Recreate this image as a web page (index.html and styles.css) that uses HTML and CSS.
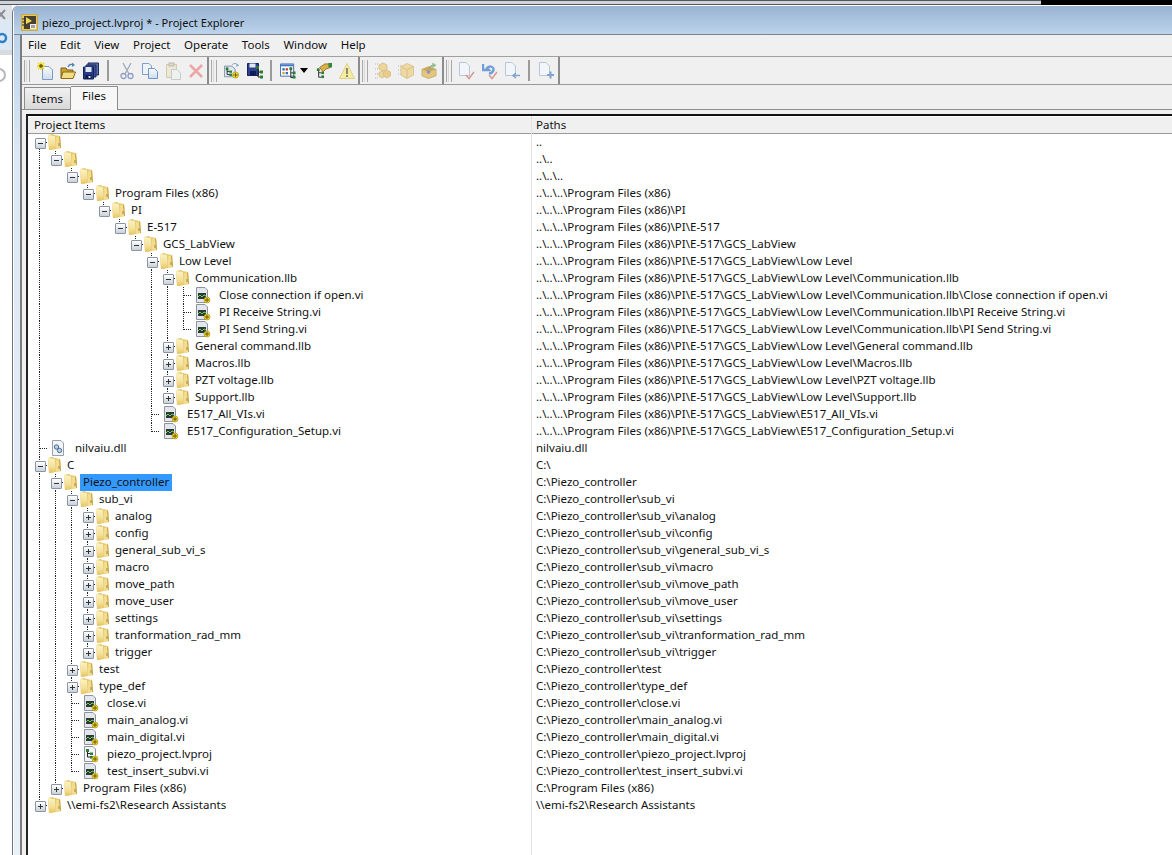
FILE: index.html
```html
<!DOCTYPE html>
<html lang="en">
<head>
<meta charset="utf-8">
<title>piezo_project.lvproj * - Project Explorer</title>
<link rel="stylesheet" href="styles.css">
</head>
<body>
<svg class="defs" width="0" height="0">
  <defs>
    <linearGradient id="fg" x1="0" y1="0" x2="0" y2="1"><stop offset="0" stop-color="#fbf3c4"/><stop offset=".6" stop-color="#f4e09a"/><stop offset="1" stop-color="#e6c35e"/></linearGradient>
    <linearGradient id="pg" x1="0" y1="0" x2="0" y2="1"><stop offset="0" stop-color="#fafbfd"/><stop offset="1" stop-color="#cfdcec"/></linearGradient>
    <symbol id="folder" viewBox="0 0 14 16">
      <path d="M0 1 L5 0 L6 1 L12 2 L13 14 L1 16 Z" fill="#e4c466"/>
      <path d="M0 1 L7 2 L8 15 L1 16 Z" fill="url(#fg)"/>
      <path d="M8 3 L12 2 L13 14 L8 15 Z" fill="#f2dc8e"/>
      <path d="M11 3 L12 2 L13 14 L12 14 Z" fill="#c9a445"/>
      <path d="M10.500 9 h1 v3 h-1 Z" fill="#9a8642"/>
    </symbol>
    <symbol id="vi" viewBox="0 0 16 17">
      <path d="M1.500 .5 H10 L12.500 3 V15.500 H1.500 Z" fill="#e3e7ed" stroke="#8e949c"/>
      <rect x="3" y="6" width="8" height="6" fill="#2e3a30"/>
      <path d="M3 10 L5 8 L7 10 L9 8 L11 9" fill="none" stroke="#6fd06f"/>
      <circle cx="12" cy="13" r="3" fill="#efd22f" stroke="#a08a10" stroke-width=".6"/>
      <path d="M10 13 h4 M12 11 v4" stroke="#6b5a05"/>
    </symbol>
    <symbol id="dll" viewBox="0 0 16 17">
      <path d="M1.500 .5 H10 L12.500 3 V15.500 H1.500 Z" fill="#f2f4f7" stroke="#9aa0a8"/>
      <circle cx="5.500" cy="7" r="2.200" fill="#bcd0e6" stroke="#4a6e96"/>
      <circle cx="8.500" cy="10.500" r="2.200" fill="#bcd0e6" stroke="#4a6e96"/>
    </symbol>
    <symbol id="proj" viewBox="0 0 16 17">
      <path d="M1.500 .5 H10 L12.500 3 V15.500 H1.500 Z" fill="#f2f4f7" stroke="#8e949c"/>
      <path d="M4.500 4 V11 H8 M4.500 7.500 H8" fill="none" stroke="#222"/>
      <rect x="3" y="3" width="3" height="3" fill="#2e7d32"/>
      <rect x="7" y="6.500" width="3" height="2.500" fill="#2e7d32"/>
      <rect x="7" y="10" width="3" height="2.500" fill="#2e7d32"/>
      <circle cx="12" cy="13" r="3" fill="#efd22f" stroke="#a08a10" stroke-width=".6"/>
      <path d="M10 13 h4 M12 11 v4" stroke="#6b5a05"/>
    </symbol>
    <symbol id="i-new" viewBox="0 0 16 18">
      <path d="M5.500 4.500 H12 L15.500 8 V17.500 H5.500 Z" fill="url(#pg)" stroke="#7a9cc4"/>
      <path d="M4 0 V8 M0 4 H8 M1 1 L7 7 M7 1 L1 7" stroke="#f2d800" stroke-width="1.300"/>
      <path d="M4 2 V6 M2 4 H6" stroke="#333"/>
    </symbol>
    <symbol id="i-open" viewBox="0 0 16 18">
      <path d="M1 6 H6 L7 8 H13 V16 H1 Z" fill="#caa235" stroke="#7d5f12"/>
      <path d="M3 10 H15.500 L13 16.500 H1 Z" fill="#f4dc83" stroke="#8a6a18"/>
      <path d="M8 5 C9 2 12 2 13 3" fill="none" stroke="#4f86c0" stroke-width="1.300"/>
      <path d="M12 .5 L15 3 L12 5 Z" fill="#4f86c0"/>
    </symbol>
    <symbol id="i-save" viewBox="0 0 16 18">
      <path d="M5 1 H15.500 V13 H5 Z" fill="#5a6ea8" stroke="#1c2a60"/>
      <path d="M3 3 H13 V15 H3 Z" fill="#3a5096" stroke="#1c2a60"/>
      <path d="M.5 5 H10.500 V17 H.5 Z" fill="#243a86" stroke="#12205a"/>
      <path d="M2.500 5 H8.500 V10 H2.500 Z" fill="#dfe6f2"/>
      <rect x="2.500" y="13" width="6" height="4" fill="#0e1a4c"/>
      <rect x="5.500" y="14" width="2" height="2" fill="#d6dcec"/>
    </symbol>
    <symbol id="i-cut" viewBox="0 0 16 18">
      <path d="M4 1 L10 12 M12 1 L6 12" stroke="#a0adbd" stroke-width="1.400" fill="none"/>
      <circle cx="4.500" cy="14" r="2.500" fill="none" stroke="#8d9dc4" stroke-width="1.300"/>
      <circle cx="11.500" cy="14" r="2.500" fill="none" stroke="#8d9dc4" stroke-width="1.300"/>
    </symbol>
    <symbol id="i-copy" viewBox="0 0 16 18">
      <path d="M.5 1.500 H7 L9.500 4 V12.500 H.5 Z" fill="#eef3fa" stroke="#7b9fd0"/>
      <path d="M6.500 6.500 H12.500 L15.500 9.500 V16.500 H6.500 Z" fill="url(#pg)" stroke="#6f96cb"/>
    </symbol>
    <symbol id="i-paste" viewBox="0 0 16 18">
      <path d="M1.500 2.500 H11.500 V15.500 H1.500 Z" fill="#ece8d8" stroke="#cfc9ae"/>
      <rect x="4" y="1" width="5" height="3" fill="#dcd9c8" stroke="#c0bba5"/>
      <path d="M6.500 7.500 H12 L15.500 11 V17.500 H6.500 Z" fill="#eef1ef" stroke="#c4ccc8"/>
    </symbol>
    <symbol id="i-del" viewBox="0 0 16 18">
      <path d="M2 3 L14 15 M14 3 L2 15" stroke="#eba7a7" stroke-width="2.600"/>
    </symbol>
    <symbol id="i-add" viewBox="0 0 18 18">
      <path d="M.5 3.500 H9 L12.500 7 V15.500 H.5 Z" fill="#dfe7f2" stroke="#7b8ca6"/>
      <path d="M3.500 6 V13 H7 M3.500 9.500 H7" fill="none" stroke="#222"/>
      <rect x="2" y="5" width="3" height="3" fill="#2c7a34"/>
      <rect x="6" y="8.500" width="3" height="2.500" fill="#2c7a34"/>
      <rect x="6" y="12" width="3" height="2.500" fill="#2c7a34"/>
      <circle cx="13" cy="13.500" r="3.500" fill="#f0d92a" stroke="#9f8a10" stroke-width=".6"/>
      <path d="M10.500 13.500 h5 M13 11 v5" stroke="#6b5a05"/>
      <path d="M9 2 C11 0 14 0 15 2" fill="none" stroke="#7f9fc6"/>
      <path d="M14 .5 L17 2.500 L14 4.500 Z" fill="#7f9fc6"/>
    </symbol>
    <symbol id="i-sav2" viewBox="0 0 16 18">
      <path d="M.5 1.500 H11.500 V13.500 H.5 Z" fill="#2c4190" stroke="#14235e"/>
      <rect x="2.500" y="1.500" width="6" height="4" fill="#e0e6f2"/>
      <rect x="3" y="9" width="6" height="4" fill="#0f1c52"/>
      <path d="M11 5 V15 H13 M11 10 H13" fill="none" stroke="#222"/>
      <rect x="9" y="4" width="3" height="3" fill="#2c7a34"/>
      <rect x="13" y="8.500" width="3" height="3" fill="#2c7a34"/>
      <rect x="13" y="13.500" width="3" height="3" fill="#2c7a34"/>
    </symbol>
    <symbol id="i-view" viewBox="0 0 17 18">
      <path d="M.5 1.500 H14.500 V14.500 H.5 Z" fill="#fff" stroke="#3d6ab0"/>
      <rect x="1" y="2" width="13" height="2" fill="#3f78c8"/>
      <rect x="2.500" y="6" width="2.500" height="2.500" fill="#2f6fc0"/>
      <rect x="6" y="6" width="2.500" height="2.500" fill="#d04040"/>
      <rect x="2.500" y="10" width="2.500" height="2.500" fill="#d9a520"/>
      <rect x="6" y="10" width="2.500" height="2.500" fill="#2f6fc0"/>
      <path d="M11.500 6 V16 H14 M11.500 11 H14" fill="none" stroke="#222"/>
      <rect x="10" y="5" width="3" height="3" fill="#2c7a34"/>
      <rect x="13.500" y="9.500" width="3" height="3" fill="#2c7a34"/>
      <rect x="13.500" y="14" width="3" height="3" fill="#2c7a34"/>
    </symbol>
    <symbol id="i-hand" viewBox="0 0 18 18">
      <path d="M3 7 V16 H6 M3 11 H6" fill="none" stroke="#222"/>
      <rect x="1" y="6" width="3" height="3" fill="#2c7a34"/>
      <rect x="6" y="9.500" width="3" height="3" fill="#2c7a34"/>
      <rect x="6" y="14" width="3" height="3" fill="#2c7a34"/>
      <path d="M4 5 L10 1 H15 L16 5 L11 7 L8 10 Z" fill="#d9b347" stroke="#7c5f16" stroke-width=".8"/>
      <rect x="14" y="0" width="4" height="5" fill="#2e8a3a"/>
    </symbol>
    <symbol id="i-warn" viewBox="0 0 16 18">
      <path d="M8 1.500 L15.500 16.500 H.5 Z" fill="#f6eca0" stroke="#ddd08a"/>
      <path d="M8 6 V12" stroke="#8a8a70" stroke-width="2"/>
      <rect x="7" y="13" width="2" height="2" fill="#8a8a70"/>
    </symbol>
    <symbol id="i-pk1" viewBox="0 0 16 18">
      <path d="M0 2 H3 M0 7 H3 M0 12 H3 M0 16 H3" stroke="#b9b6a6" stroke-dasharray="1 1"/>
      <path d="M8 1 L12 3 V7 L8 9 L4 7 V3 Z" fill="#ecd69e" stroke="#d9c184"/>
      <path d="M7 9 L10 10.500 V14 L7 16 L4 14 V10.500 Z" fill="#ecd69e" stroke="#d9c184"/>
      <path d="M12 8 L15.500 10 V14 L12 16 L8.500 14 V10 Z" fill="#e7cc8c" stroke="#d9c184"/>
    </symbol>
    <symbol id="i-pk2" viewBox="0 0 16 18">
      <path d="M0 4 H3 M0 8 H3 M0 12 H3" stroke="#b9b6a6" stroke-dasharray="1 1"/>
      <path d="M9 1.500 L15.500 4.500 V13 L9 16.500 L3 13 V4.500 Z" fill="#eed9a4" stroke="#dcc68f"/>
      <path d="M3 4.500 L9 8 L15.500 4.500 M9 8 V16.500" fill="none" stroke="#d9bf80"/>
    </symbol>
    <symbol id="i-pk3" viewBox="0 0 17 18">
      <path d="M1 7 L8 10 L16 7 V14 L8 17 L1 14 Z" fill="#e3c680" stroke="#ccb06c"/>
      <path d="M1 7 L8 4 L16 7 L8 10 Z" fill="#c9a85e"/>
      <circle cx="8" cy="10" r="1.800" fill="#8d8fc6"/>
      <path d="M9 6 C10 4 11 3 13 3" fill="none" stroke="#79ae79" stroke-width="1.400"/>
      <path d="M12 0 L16.500 3 L12 6 Z" fill="#8fc08f"/>
    </symbol>
    <symbol id="i-chk" viewBox="0 0 16 18">
      <path d="M.5 .5 H7 L10.500 4 V13.500 H.5 Z" fill="#f2f5fa" stroke="#b6c6dc"/>
      <path d="M7 13 L10 16.500 L15 10" fill="none" stroke="#d69a92" stroke-width="1.500"/>
    </symbol>
    <symbol id="i-undo" viewBox="0 0 16 18">
      <path d="M1 2 V8 H7 L5 6 C8 3 12 5 11.500 8 C11 11 8.500 11.500 7 11" fill="none" stroke="#6f9fd8" stroke-width="2.400"/>
      <path d="M7 13 L10 16.500 L15 10" fill="none" stroke="#d69a92" stroke-width="1.500"/>
    </symbol>
    <symbol id="i-back" viewBox="0 0 16 18">
      <path d="M.5 .5 H7 L10.500 4 V13.500 H.5 Z" fill="#f2f5fa" stroke="#b6c6dc"/>
      <path d="M15 13.500 H8 M11 11 L8 13.500 L11 16" fill="none" stroke="#7fa3cf" stroke-width="1.500"/>
    </symbol>
    <symbol id="i-plus" viewBox="0 0 16 18">
      <path d="M.5 .5 H7 L10.500 4 V13.500 H.5 Z" fill="#f2f5fa" stroke="#b6c6dc"/>
      <path d="M8 13 H15 M11.500 9.500 V16.500" stroke="#7fa3cf" stroke-width="2"/>
    </symbol>
    <symbol id="lv" viewBox="0 0 17 17">
      <rect x=".5" y=".5" width="16" height="16" fill="#e7c65a" stroke="#c9ab48"/>
      <rect x="3" y="2" width="12" height="13" fill="#4a4030"/>
      <path d="M1 5 H4 M1 8 H4 M1 11 H4" stroke="#332c1c"/>
      <path d="M5 3 L11 7 L5 10 Z" fill="#f2d85a"/>
      <rect x="9" y="10" width="6" height="5" fill="#e9ecf0"/>
      <path d="M11 11 v3 M13 11 v3" stroke="#555"/>
    </symbol>
  </defs>
</svg>

<div class="top"><div class="top-l"></div><div class="top-r"></div></div>
<div class="main">
  <aside class="side">
    <svg class="side-x" viewBox="0 0 12 12" width="12" height="12"><path d="M-3 1 L5 10 M5 1 L-3 10" stroke="#8a8f96" stroke-width="2"/></svg>
    <svg class="side-s" viewBox="0 0 12 14" width="12" height="14"><circle cx="6" cy="6" r="4" fill="none" stroke="#2f7fc4" stroke-width="2.500"/></svg>
    <span class="side-c"></span>
  </aside>
  <div class="win">
    <header class="title">
      <svg class="title-i"><use href="#lv"/></svg>
      <span>piezo_project.lvproj * - Project Explorer</span>
    </header>
    <div class="frame">
      <div class="client">
        <nav class="menu">
          <span>File</span><span>Edit</span><span>View</span><span>Project</span><span>Operate</span><span>Tools</span><span>Window</span><span>Help</span>
        </nav>
        <div class="tools">
          <div class="tg tg1">
            <i class="grip"></i>
            <svg class="ic"><use href="#i-new"/></svg><svg class="ic"><use href="#i-open"/></svg><svg class="ic"><use href="#i-save"/></svg>
            <i class="sep"></i>
            <svg class="ic"><use href="#i-cut"/></svg><svg class="ic"><use href="#i-copy"/></svg><svg class="ic"><use href="#i-paste"/></svg><svg class="ic"><use href="#i-del"/></svg>
          </div>
          <div class="tg tg2">
            <i class="grip"></i>
            <svg class="ic"><use href="#i-add"/></svg><svg class="ic"><use href="#i-sav2"/></svg>
            <i class="sep"></i>
            <svg class="ic"><use href="#i-view"/></svg><i class="drop"></i><svg class="ic"><use href="#i-hand"/></svg><svg class="ic"><use href="#i-warn"/></svg>
          </div>
          <div class="tg tg3">
            <i class="grip"></i>
            <svg class="ic"><use href="#i-pk1"/></svg><svg class="ic"><use href="#i-pk2"/></svg><svg class="ic"><use href="#i-pk3"/></svg>
          </div>
          <div class="tg tg4">
            <i class="grip"></i>
            <svg class="ic"><use href="#i-chk"/></svg><svg class="ic"><use href="#i-undo"/></svg><svg class="ic"><use href="#i-back"/></svg>
            <i class="sep"></i>
            <svg class="ic"><use href="#i-plus"/></svg>
          </div>
        </div>
        <div class="tabs">
          <span class="tab">Items</span>
          <span class="tab on">Files</span>
        </div>
        <div class="tree-wrap">
          <section class="col-tree">
            <div class="hd">Project Items</div>
            <div class="row"><i class="x first m"></i><svg class="f"><use href="#folder"/></svg></div>
            <div class="row"><i class="g on"></i><i class="x end m"></i><svg class="f"><use href="#folder"/></svg></div>
            <div class="row"><i class="g on"></i><i class="g"></i><i class="x end m"></i><svg class="f"><use href="#folder"/></svg></div>
            <div class="row"><i class="g on"></i><i class="g w2"></i><i class="x end m"></i><svg class="f"><use href="#folder"/></svg><span>Program Files (x86)</span></div>
            <div class="row"><i class="g on"></i><i class="g w3"></i><i class="x end m"></i><svg class="f"><use href="#folder"/></svg><span>PI</span></div>
            <div class="row"><i class="g on"></i><i class="g w4"></i><i class="x end m"></i><svg class="f"><use href="#folder"/></svg><span>E-517</span></div>
            <div class="row"><i class="g on"></i><i class="g w5"></i><i class="x end m"></i><svg class="f"><use href="#folder"/></svg><span>GCS_LabView</span></div>
            <div class="row"><i class="g on"></i><i class="g w6"></i><i class="x mid m"></i><svg class="f"><use href="#folder"/></svg><span>Low Level</span></div>
            <div class="row"><i class="g on"></i><i class="g w6"></i><i class="g on"></i><i class="x mid m"></i><svg class="f"><use href="#folder"/></svg><span>Communication.llb</span></div>
            <div class="row"><i class="g on"></i><i class="g w6"></i><i class="g on"></i><i class="g on"></i><i class="l"></i><svg class="v"><use href="#vi"/></svg><span>Close connection if open.vi</span></div>
            <div class="row"><i class="g on"></i><i class="g w6"></i><i class="g on"></i><i class="g on"></i><i class="l"></i><svg class="v"><use href="#vi"/></svg><span>PI Receive String.vi</span></div>
            <div class="row"><i class="g on"></i><i class="g w6"></i><i class="g on"></i><i class="g on"></i><i class="l end"></i><svg class="v"><use href="#vi"/></svg><span>PI Send String.vi</span></div>
            <div class="row"><i class="g on"></i><i class="g w6"></i><i class="g on"></i><i class="x mid p"></i><svg class="f"><use href="#folder"/></svg><span>General command.llb</span></div>
            <div class="row"><i class="g on"></i><i class="g w6"></i><i class="g on"></i><i class="x mid p"></i><svg class="f"><use href="#folder"/></svg><span>Macros.llb</span></div>
            <div class="row"><i class="g on"></i><i class="g w6"></i><i class="g on"></i><i class="x mid p"></i><svg class="f"><use href="#folder"/></svg><span>PZT voltage.llb</span></div>
            <div class="row"><i class="g on"></i><i class="g w6"></i><i class="g on"></i><i class="x end p"></i><svg class="f"><use href="#folder"/></svg><span>Support.llb</span></div>
            <div class="row"><i class="g on"></i><i class="g w6"></i><i class="l"></i><svg class="v"><use href="#vi"/></svg><span>E517_All_VIs.vi</span></div>
            <div class="row"><i class="g on"></i><i class="g w6"></i><i class="l end"></i><svg class="v"><use href="#vi"/></svg><span>E517_Configuration_Setup.vi</span></div>
            <div class="row"><i class="l"></i><svg class="v"><use href="#dll"/></svg><span>nilvaiu.dll</span></div>
            <div class="row"><i class="x mid m"></i><svg class="f"><use href="#folder"/></svg><span>C</span></div>
            <div class="row"><i class="g on"></i><i class="x mid m"></i><svg class="f"><use href="#folder"/></svg><span class="sel">Piezo_controller</span></div>
            <div class="row"><i class="g on"></i><i class="g on"></i><i class="x mid m"></i><svg class="f"><use href="#folder"/></svg><span>sub_vi</span></div>
            <div class="row"><i class="g on"></i><i class="g on"></i><i class="g on"></i><i class="x mid p"></i><svg class="f"><use href="#folder"/></svg><span>analog</span></div>
            <div class="row"><i class="g on"></i><i class="g on"></i><i class="g on"></i><i class="x mid p"></i><svg class="f"><use href="#folder"/></svg><span>config</span></div>
            <div class="row"><i class="g on"></i><i class="g on"></i><i class="g on"></i><i class="x mid p"></i><svg class="f"><use href="#folder"/></svg><span>general_sub_vi_s</span></div>
            <div class="row"><i class="g on"></i><i class="g on"></i><i class="g on"></i><i class="x mid p"></i><svg class="f"><use href="#folder"/></svg><span>macro</span></div>
            <div class="row"><i class="g on"></i><i class="g on"></i><i class="g on"></i><i class="x mid p"></i><svg class="f"><use href="#folder"/></svg><span>move_path</span></div>
            <div class="row"><i class="g on"></i><i class="g on"></i><i class="g on"></i><i class="x mid p"></i><svg class="f"><use href="#folder"/></svg><span>move_user</span></div>
            <div class="row"><i class="g on"></i><i class="g on"></i><i class="g on"></i><i class="x mid p"></i><svg class="f"><use href="#folder"/></svg><span>settings</span></div>
            <div class="row"><i class="g on"></i><i class="g on"></i><i class="g on"></i><i class="x mid p"></i><svg class="f"><use href="#folder"/></svg><span>tranformation_rad_mm</span></div>
            <div class="row"><i class="g on"></i><i class="g on"></i><i class="g on"></i><i class="x end p"></i><svg class="f"><use href="#folder"/></svg><span>trigger</span></div>
            <div class="row"><i class="g on"></i><i class="g on"></i><i class="x mid p"></i><svg class="f"><use href="#folder"/></svg><span>test</span></div>
            <div class="row"><i class="g on"></i><i class="g on"></i><i class="x mid p"></i><svg class="f"><use href="#folder"/></svg><span>type_def</span></div>
            <div class="row"><i class="g on"></i><i class="g on"></i><i class="l"></i><svg class="v"><use href="#vi"/></svg><span>close.vi</span></div>
            <div class="row"><i class="g on"></i><i class="g on"></i><i class="l"></i><svg class="v"><use href="#vi"/></svg><span>main_analog.vi</span></div>
            <div class="row"><i class="g on"></i><i class="g on"></i><i class="l"></i><svg class="v"><use href="#vi"/></svg><span>main_digital.vi</span></div>
            <div class="row"><i class="g on"></i><i class="g on"></i><i class="l"></i><svg class="v"><use href="#proj"/></svg><span>piezo_project.lvproj</span></div>
            <div class="row"><i class="g on"></i><i class="g on"></i><i class="l end"></i><svg class="v"><use href="#vi"/></svg><span>test_insert_subvi.vi</span></div>
            <div class="row"><i class="g on"></i><i class="x end p"></i><svg class="f"><use href="#folder"/></svg><span>Program Files (x86)</span></div>
            <div class="row"><i class="x end p"></i><svg class="f"><use href="#folder"/></svg><span>\\emi-fs2\Research Assistants</span></div>
          </section>
          <section class="col-path">
            <div class="hd">Paths</div>
            <div class="prow">..</div>
            <div class="prow">..\..</div>
            <div class="prow">..\..\..</div>
            <div class="prow">..\..\..\Program Files (x86)</div>
            <div class="prow">..\..\..\Program Files (x86)\PI</div>
            <div class="prow">..\..\..\Program Files (x86)\PI\E-517</div>
            <div class="prow">..\..\..\Program Files (x86)\PI\E-517\GCS_LabView</div>
            <div class="prow">..\..\..\Program Files (x86)\PI\E-517\GCS_LabView\Low Level</div>
            <div class="prow">..\..\..\Program Files (x86)\PI\E-517\GCS_LabView\Low Level\Communication.llb</div>
            <div class="prow">..\..\..\Program Files (x86)\PI\E-517\GCS_LabView\Low Level\Communication.llb\Close connection if open.vi</div>
            <div class="prow">..\..\..\Program Files (x86)\PI\E-517\GCS_LabView\Low Level\Communication.llb\PI Receive String.vi</div>
            <div class="prow">..\..\..\Program Files (x86)\PI\E-517\GCS_LabView\Low Level\Communication.llb\PI Send String.vi</div>
            <div class="prow">..\..\..\Program Files (x86)\PI\E-517\GCS_LabView\Low Level\General command.llb</div>
            <div class="prow">..\..\..\Program Files (x86)\PI\E-517\GCS_LabView\Low Level\Macros.llb</div>
            <div class="prow">..\..\..\Program Files (x86)\PI\E-517\GCS_LabView\Low Level\PZT voltage.llb</div>
            <div class="prow">..\..\..\Program Files (x86)\PI\E-517\GCS_LabView\Low Level\Support.llb</div>
            <div class="prow">..\..\..\Program Files (x86)\PI\E-517\GCS_LabView\E517_All_VIs.vi</div>
            <div class="prow">..\..\..\Program Files (x86)\PI\E-517\GCS_LabView\E517_Configuration_Setup.vi</div>
            <div class="prow">nilvaiu.dll</div>
            <div class="prow">C:\</div>
            <div class="prow">C:\Piezo_controller</div>
            <div class="prow">C:\Piezo_controller\sub_vi</div>
            <div class="prow">C:\Piezo_controller\sub_vi\analog</div>
            <div class="prow">C:\Piezo_controller\sub_vi\config</div>
            <div class="prow">C:\Piezo_controller\sub_vi\general_sub_vi_s</div>
            <div class="prow">C:\Piezo_controller\sub_vi\macro</div>
            <div class="prow">C:\Piezo_controller\sub_vi\move_path</div>
            <div class="prow">C:\Piezo_controller\sub_vi\move_user</div>
            <div class="prow">C:\Piezo_controller\sub_vi\settings</div>
            <div class="prow">C:\Piezo_controller\sub_vi\tranformation_rad_mm</div>
            <div class="prow">C:\Piezo_controller\sub_vi\trigger</div>
            <div class="prow">C:\Piezo_controller\test</div>
            <div class="prow">C:\Piezo_controller\type_def</div>
            <div class="prow">C:\Piezo_controller\close.vi</div>
            <div class="prow">C:\Piezo_controller\main_analog.vi</div>
            <div class="prow">C:\Piezo_controller\main_digital.vi</div>
            <div class="prow">C:\Piezo_controller\piezo_project.lvproj</div>
            <div class="prow">C:\Piezo_controller\test_insert_subvi.vi</div>
            <div class="prow">C:\Program Files (x86)</div>
            <div class="prow">\\emi-fs2\Research Assistants</div>
          </section>
        </div>
      </div>
    </div>
  </div>
</div>
</body>
</html>
```
FILE: styles.css
```css
* { box-sizing: border-box; }
html, body { margin: 0; height: 855px; overflow: hidden; }
body {
  width: 1172px;
  display: flex;
  flex-direction: column;
  background: #fff;
  color: #111;
  font: 11.5px/15px "Noto Sans", "Open Sans", sans-serif;
  --v: repeating-linear-gradient(to bottom, #222 0 1px, transparent 1px 2px);
  --h: repeating-linear-gradient(to right, #222 0 1px, transparent 1px 2px);
}
.defs { display: block; height: 0; }
i { display: block; font-style: normal; flex: none; }

/* top strip */
.top { display: flex; height: 5px; flex: none; }
.top-l { width: 1041px; background: linear-gradient(#555 0 1px, #cdd3dc 1px 4px, #555 4px); }
.top-r { flex: 1; background: #000; }

/* left strip: the window behind */
.main { flex: 1; display: flex; min-height: 0; }
.side {
  width: 12px; flex: none;
  display: flex; flex-direction: column;
  background: linear-gradient(#dfe3e8 0 14px, #dce8f4 14px 45px, #d8dadd 45px 50px, #fff 50px);
  overflow: hidden;
}
.side-x { margin-top: 4px; flex: none; }
.side-s { margin: 11px 0 0 -4px; flex: none; }
.side-c { width: 14px; height: 14px; border: 2px solid #b5b5b5; border-radius: 50%; margin: 22px 0 0 -8px; flex: none; }

/* window */
.win {
  flex: 1; display: flex; flex-direction: column; min-width: 0;
  border-left: 1px solid #6d7680;
  border-top-left-radius: 8px;
  overflow: hidden;
  background: #fff;
  padding-left: 1px;
}
.title {
  height: 30px; flex: none;
  display: flex; align-items: center;
  padding: 4px 0 0 7px; gap: 4px;
  background: linear-gradient(#98b3d1, #bcd4ec);
  border-top: 1px solid #fff;
  border-bottom: 1px solid #7f8387;
  color: #111;
  font-size: 11.1px;
}
.title-i { width: 17px; height: 17px; flex: none; }
.frame {
  flex: 1; display: flex; min-height: 0;
  padding-left: 6px;
  background: linear-gradient(#bcd4ec, #dce8f5 120px, #e8f0f8);
}
.client {
  flex: 1; display: flex; flex-direction: column; min-width: 0;
  border-left: 2px solid #7c7c7c;
  background: #f0f0f0;
}

/* menu */
.menu {
  height: 22px; flex: none;
  display: flex; align-items: center;
  padding: 0 0 2px 6px;
  border-bottom: 1px solid #a0a0a0;
}
.menu span { margin-right: 13.6px; }

/* toolbar */
.tools {
  height: 28px; flex: none;
  display: flex;
  border-bottom: 1px solid #999;
}
.tg { display: flex; align-items: center; padding-left: 2px; border-right: 2px solid #8c8c8c; }
.grip {
  width: 6px; height: 22px; margin-right: 3px;
  border-left: 1px solid #a8a8a8; border-right: 1px solid #a8a8a8;
  background: linear-gradient(#d8d8d8, #d8d8d8) 1px 0 / 1px 100% no-repeat;
}
.tg1 { width: 187px; }
.tg2 { width: 151px; }
.tg3 { width: 84px; }
.tg4 { width: 116px; }
.tools .ic { width: 16px; height: 18px; margin: 0 3px 0 4px; flex: none; }
.sep { width: 2px; height: 21px; background: #9a9a9a; margin: 0 6px 0 5px; }
.tg2 .sep { margin: 0 4px; }
.tg4 .sep { margin: 0 5px 0 4px; }
.drop {
  width: 0; height: 0; margin: 0 4px 0 1px;
  border: 4px solid transparent; border-top: 5px solid #000; border-bottom: 0;
}

/* tabs */
.tabs {
  height: 25px; flex: none;
  display: flex; align-items: flex-end;
  padding-left: 2px;
  border-bottom: 1px solid #8d8d8d;
}
.tab {
  width: 47px; height: 22px;
  display: flex; align-items: center; justify-content: center;
  background: linear-gradient(#f0f0f0, #d9d9d9);
  border: 1px solid #8d8d8d; border-bottom: 0;
}
.tab.on {
  height: 24px; margin-bottom: -1px; align-items: flex-start;
  background: #f7f7f7; border-left: 0; padding-top: 1px;
}

/* tree panel */
.tree-wrap {
  flex: 1; display: flex; min-height: 0;
  margin: 4px 0 0 4px;
  background: #fff;
  border-left: 2px solid #222;
  border-top: 2px solid #111;
}
.hd {
  height: 17px; flex: none;
  margin-top: 1px;
  padding: 0 0 0 6px;
  background: #f0f0f0;
  border-bottom: 1px solid #999;
}
.col-tree { width: 503px; flex: none; display: flex; flex-direction: column; }
.col-path { flex: 1; display: flex; flex-direction: column; border-left: 1px solid #e3e3e3; }
.col-path .hd { padding-left: 4px; }
.row { height: 17px; flex: none; display: flex; padding-left: 4px; white-space: nowrap; }
.prow { height: 17px; flex: none; padding-left: 4px; white-space: nowrap; }

.g { width: 16px; height: 17px; }
.g.on { background: var(--v) 7px 0 / 1px 100% no-repeat; }
.g.w2 { width: 32px; }
.g.w3 { width: 48px; }
.g.w4 { width: 64px; }
.g.w5 { width: 80px; }
.g.w6 { width: 96px; }

.x, .l { width: 16px; height: 17px; }
.x::before {
  content: ""; display: block;
  width: 9px; height: 9px;
  margin: 4px 0 0 3px;
  border: 1px solid #8b95a1;
  border-radius: 1px;
}
.x.m::before {
  background: linear-gradient(#333, #333) center / 5px 1px no-repeat, linear-gradient(#fff, #c9d1da);
}
.x.p::before {
  background: linear-gradient(#333, #333) center / 5px 1px no-repeat, linear-gradient(#333, #333) center / 1px 5px no-repeat, linear-gradient(#fff, #c9d1da);
}
.x.first { background: var(--v) 7px 13px / 1px 4px no-repeat, var(--h) 12px 8px / 4px 1px no-repeat; }
.x.mid { background: var(--v) 7px 0 / 1px 100% no-repeat, var(--h) 12px 8px / 4px 1px no-repeat; }
.x.end { background: var(--v) 7px 0 / 1px 4px no-repeat, var(--h) 12px 8px / 4px 1px no-repeat; }
.l { background: var(--v) 7px 0 / 1px 100% no-repeat, var(--h) 8px 8px / 8px 1px no-repeat; }
.l.end { background: var(--v) 7px 0 / 1px 9px no-repeat, var(--h) 8px 8px / 8px 1px no-repeat; }

.f { width: 14px; height: 16px; margin-right: 5px; flex: none; }
.v { width: 16px; height: 17px; margin: 0 8px 0 3px; flex: none; }
.sel { background: #3399ff; margin-left: -3px; padding: 0 3px; height: 17px; }
```
